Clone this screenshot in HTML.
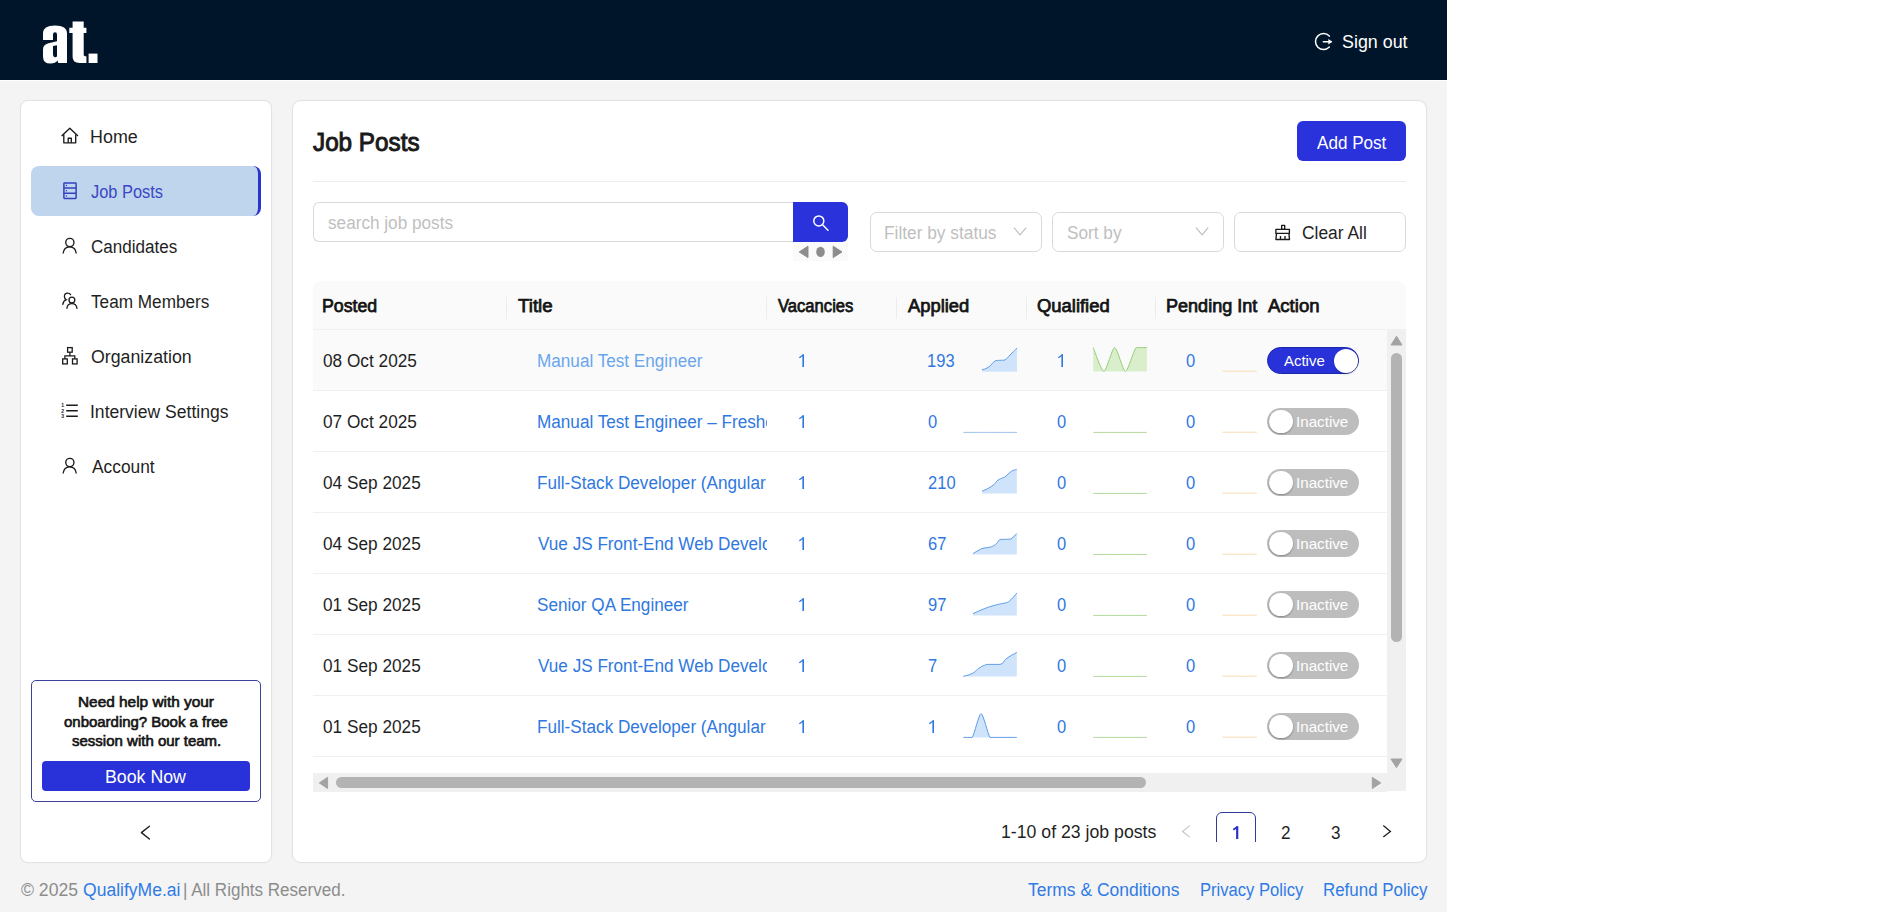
<!DOCTYPE html>
<html><head><meta charset="utf-8"><title>Job Posts</title>
<style>
html,body{margin:0;padding:0;background:#fff;width:1904px;height:916px;overflow:hidden;}
.b{position:absolute;}
.t{position:absolute;white-space:nowrap;font-family:"Liberation Sans", sans-serif;}
svg{overflow:visible;}
</style></head><body>
<div class="b" style="left:0px;top:0px;width:1447px;height:80px;background:#001529;"></div>
<div class="b" style="left:0px;top:80px;width:1447px;height:1px;background:#ffffff;"></div>
<div class="b" style="left:0px;top:81px;width:1447px;height:831px;background:#f4f4f4;"></div>
<svg class="b" style="left:30px;top:10px;" width="80" height="60" viewBox="30 10 80 60"><g fill="#fff" fill-rule="evenodd">
<path d="M43,40 V33.5 Q43,25.4 55,25.4 Q67,25.4 67,33.5 V63 H58.2 L57.6,60.6 Q55.6,63.6 50.5,63.6 Q43,63.6 43,56.5 V49.5 Q43,44.6 48.5,43.2 L57,41.3 V40 Z M53,40 V34.5 Q53,32.2 55,32.2 Q57,32.2 57,34.5 V40 Z M53,46 L57,45.2 V56.6 Q55.8,57.6 54.6,57.3 Q53,56.8 53,54.5 Z"/>
<path d="M72.6,21.5 H83.7 V27.7 H86.4 V32.9 H83.7 V54.8 Q83.7,56.2 85,56.2 H86.4 V63 H79.5 Q72.6,63 72.6,56.8 V32.9 H69.3 V27.7 H72.6 Z"/>
<rect x="88.6" y="53.6" width="8.9" height="9.4"/>
</g></svg>
<svg class="b" style="left:1310px;top:28px;" width="30" height="28" viewBox="1310 28 30 28"><g fill="none" stroke="#fff" stroke-width="1.5" stroke-linecap="round">
<path d="M1329.3,36.1 A8,8 0 1 0 1329.3,47.1"/>
<path d="M1323.3,41.7 H1331"/>
</g><path d="M1328.3,39 L1332.4,41.7 L1328.3,44.4 Z" fill="#fff"/></svg>
<div class="t" style="left:1341.93px;top:32.80px;font-size:18px;line-height:18px;color:#ffffff;transform:scaleX(0.9923);transform-origin:0 0;">Sign out</div>
<div class="b" style="left:20px;top:100px;width:252px;height:763px;background:#fff;border:1px solid #e3e3e3;border-radius:8px;box-sizing:border-box;box-shadow:0 0 1.5px rgba(0,0,0,0.05);"></div>
<div class="b" style="left:31px;top:166px;width:230px;height:50px;background:#bed5ed;border-radius:8px;border-right:3.5px solid #2834cc;box-sizing:border-box;"></div>
<svg class="b" style="left:56px;top:122px;" width="28" height="26" viewBox="56 122 28 26"><g fill="none" stroke="#1a1a1a" stroke-width="1.35" stroke-linejoin="round">
<path d="M61.6,136.1 L69.8,128.2 L78,136.1"/><path d="M63.8,134.4 V142.8 H75.7 V134.4"/><path d="M68.2,142.8 V138.2 H71.3 V142.8"/></g></svg>
<svg class="b" style="left:56px;top:177px;" width="28" height="27" viewBox="56 177 28 27"><g fill="none" stroke="#3440c0" stroke-width="1.5">
<rect x="63.9" y="183" width="12.2" height="15.4" rx="0.6"/><path d="M63.9,188 H76.1 M63.9,193.2 H76.1"/></g>
<g fill="#3440c0"><circle cx="66.4" cy="185.6" r="0.75"/><circle cx="66.4" cy="190.7" r="0.75"/><circle cx="66.4" cy="195.9" r="0.75"/></g></svg>
<svg class="b" style="left:56px;top:233px;" width="28" height="26" viewBox="56 233 28 26"><g fill="none" stroke="#1a1a1a" stroke-width="1.35">
<circle cx="69.85" cy="242.5" r="4.1"/>
<path d="M63.1,253.5 C63.6,249.3 66.3,246.9 69.7,246.9 C73.1,246.9 75.8,249.3 76.3,253.5"/></g></svg>
<svg class="b" style="left:56px;top:288px;" width="28" height="26" viewBox="56 288 28 26"><g fill="none" stroke="#1a1a1a" stroke-width="1.3" stroke-linecap="round">
<circle cx="71.9" cy="300.1" r="2.9"/>
<path d="M66.9,308.3 C67.2,305.5 69.3,303.7 71.9,303.7 C74.5,303.7 76.6,305.5 77,308.3"/>
<path d="M70.6,294.6 C70,293.7 68.9,293.1 67.6,293.1 C65.7,293.1 64.4,294.6 64.4,296.4 C64.4,297.9 65.2,299.1 66.3,299.7 C64.4,300.4 63.1,302.2 62.8,304.4"/></g></svg>
<svg class="b" style="left:56px;top:342px;" width="28" height="28" viewBox="56 342 28 28"><g fill="none" stroke="#1a1a1a" stroke-width="1.3">
<rect x="67.6" y="347.6" width="4.6" height="4.6"/><rect x="62.7" y="358.9" width="4.6" height="5"/><rect x="72.5" y="358.9" width="4.6" height="5"/>
<path d="M69.9,352.2 V355.8 M64.9,358.9 V355.8 H74.8 V358.9"/></g></svg>
<svg class="b" style="left:56px;top:396px;" width="28" height="28" viewBox="56 396 28 28"><g fill="none" stroke="#1a1a1a" stroke-width="1.5"><path d="M66.2,405.2 H77.8 M66.2,410.7 H77.8 M66.2,416.2 H77.8"/></g>
<g fill="#1a1a1a" font-family="Liberation Sans" font-size="5" font-weight="700"><text x="61.2" y="407.2">1</text><text x="61.2" y="412.7">2</text><text x="61.2" y="418.2">3</text></g></svg>
<svg class="b" style="left:56px;top:453px;" width="28" height="26" viewBox="56 453 28 26"><g fill="none" stroke="#1a1a1a" stroke-width="1.35">
<circle cx="69.85" cy="462.5" r="4.1"/>
<path d="M63.1,473.5 C63.6,469.3 66.3,466.9 69.7,466.9 C73.1,466.9 75.8,469.3 76.3,473.5"/></g></svg>
<div class="t" style="left:90.21px;top:128.00px;font-size:18px;line-height:18px;color:#1f1f1f;transform:scaleX(0.9945);transform-origin:0 0;">Home</div>
<div class="t" style="left:90.97px;top:182.80px;font-size:18px;line-height:18px;color:#3a46c4;transform:scaleX(0.9114);transform-origin:0 0;">Job Posts</div>
<div class="t" style="left:90.87px;top:237.60px;font-size:18px;line-height:18px;color:#1f1f1f;transform:scaleX(0.9473);transform-origin:0 0;">Candidates</div>
<div class="t" style="left:91.34px;top:292.60px;font-size:18px;line-height:18px;color:#1f1f1f;transform:scaleX(0.9545);transform-origin:0 0;">Team Members</div>
<div class="t" style="left:90.84px;top:347.60px;font-size:18px;line-height:18px;color:#1f1f1f;transform:scaleX(0.9860);transform-origin:0 0;">Organization</div>
<div class="t" style="left:90.12px;top:402.60px;font-size:18px;line-height:18px;color:#1f1f1f;transform:scaleX(0.9744);transform-origin:0 0;">Interview Settings</div>
<div class="t" style="left:91.70px;top:457.60px;font-size:18px;line-height:18px;color:#1f1f1f;transform:scaleX(0.9634);transform-origin:0 0;">Account</div>
<div class="b" style="left:31px;top:680px;width:230px;height:122px;border:1.3px solid #3c419c;border-radius:5px;box-sizing:border-box;background:#fff;"></div>
<div class="t" style="left:78.02px;top:694.10px;font-size:15px;line-height:15px;color:#141414;-webkit-text-stroke:0.65px #141414;transform:scaleX(1.0257);transform-origin:0 0;">Need help with your</div>
<div class="t" style="left:64.38px;top:713.90px;font-size:15px;line-height:15px;color:#141414;-webkit-text-stroke:0.65px #141414;transform:scaleX(0.9969);transform-origin:0 0;">onboarding? Book a free</div>
<div class="t" style="left:72.03px;top:733.40px;font-size:15px;line-height:15px;color:#141414;-webkit-text-stroke:0.65px #141414;">session with our team.</div>
<div class="b" style="left:42px;top:761px;width:208px;height:30px;background:#2832d8;border-radius:4px;"></div>
<div class="t" style="left:105.32px;top:767.80px;font-size:18px;line-height:18px;color:#fff;transform:scaleX(0.9863);transform-origin:0 0;">Book Now</div>
<svg class="b" style="left:132px;top:818px;" width="28" height="28" viewBox="132 818 28 28"><path d="M149.4,826.2 L141.4,832.6 L149.4,839" fill="none" stroke="#1f1f1f" stroke-width="1.4" stroke-linecap="round" stroke-linejoin="round"/></svg>
<div class="b" style="left:292px;top:100px;width:1135px;height:763px;background:#fff;border:1px solid #e3e3e3;border-radius:9px;box-sizing:border-box;box-shadow:0 0 1.5px rgba(0,0,0,0.05);"></div>
<div class="t" style="left:312.84px;top:130.20px;font-size:25px;line-height:25px;color:#1a1a1a;-webkit-text-stroke:0.95px #1a1a1a;transform:scaleX(0.9705);transform-origin:0 0;">Job Posts</div>
<div class="b" style="left:1297px;top:121px;width:109px;height:40px;background:#2932db;border-radius:6px;"></div>
<div class="t" style="left:1316.90px;top:133.90px;font-size:18px;line-height:18px;color:#fff;transform:scaleX(0.9496);transform-origin:0 0;">Add Post</div>
<div class="b" style="left:313px;top:181px;width:1093px;height:1px;background:#ececec;"></div>
<div class="b" style="left:313px;top:202px;width:481px;height:40px;border:1px solid #d9d9d9;border-right:none;border-radius:6px 0 0 6px;box-sizing:border-box;background:#fff;"></div>
<div class="t" style="left:328.02px;top:214.00px;font-size:18px;line-height:18px;color:#bfbfbf;transform:scaleX(0.9538);transform-origin:0 0;">search job posts</div>
<div class="b" style="left:793px;top:202px;width:55px;height:40px;background:#2932db;border-radius:0 6px 6px 0;"></div>
<svg class="b" style="left:805px;top:208px;" width="30" height="28" viewBox="805 208 30 28"><g fill="none" stroke="#fff" stroke-width="1.5" stroke-linecap="round"><circle cx="818.8" cy="220.9" r="5"/><path d="M822.6,224.8 L828,230.2"/></g></svg>
<div class="b" style="left:793px;top:242px;width:55px;height:19px;background:#fafafa;"></div>
<svg class="b" style="left:795px;top:244px;" width="52" height="16" viewBox="795 244 52 16"><g fill="#8c8c8c"><path d="M808,246.2 V257.6 L799.2,251.9 Z" stroke="#8c8c8c" stroke-width="1" stroke-linejoin="round"/><ellipse cx="820.5" cy="251.9" rx="4.3" ry="5.2"/><path d="M833.2,246.2 V257.6 L842,251.9 Z" stroke="#8c8c8c" stroke-width="1" stroke-linejoin="round"/></g></svg>
<div class="b" style="left:870px;top:212px;width:172px;height:40px;border:1px solid #d9d9d9;border-radius:7px;box-sizing:border-box;background:#fff;"></div>
<div class="t" style="left:884.06px;top:223.70px;font-size:18px;line-height:18px;color:#bfbfbf;transform:scaleX(0.9610);transform-origin:0 0;">Filter by status</div>
<svg class="b" style="left:1012.3px;top:224px;" width="16" height="14" viewBox="1012.3 224 16 14"><path d="M1014.3,227.6 L1020.4,234.9 L1026.5,227.6" fill="none" stroke="#bfbfbf" stroke-width="1.2"/></svg>
<div class="b" style="left:1052px;top:212px;width:172px;height:40px;border:1px solid #d9d9d9;border-radius:7px;box-sizing:border-box;background:#fff;"></div>
<div class="t" style="left:1066.66px;top:223.70px;font-size:18px;line-height:18px;color:#bfbfbf;transform:scaleX(0.9568);transform-origin:0 0;">Sort by</div>
<svg class="b" style="left:1194.3px;top:224px;" width="16" height="14" viewBox="1194.3 224 16 14"><path d="M1196.3,227.6 L1202.3999999999999,234.9 L1208.5,227.6" fill="none" stroke="#bfbfbf" stroke-width="1.2"/></svg>
<div class="b" style="left:1234px;top:212px;width:172px;height:40px;border:1px solid #d9d9d9;border-radius:7px;box-sizing:border-box;background:#fff;"></div>
<svg class="b" style="left:1272px;top:222px;" width="22" height="20" viewBox="1272 222 22 20"><g fill="none" stroke="#1a1a1a" stroke-width="1.35" stroke-linejoin="round">
<rect x="1281.7" y="225.3" width="3" height="4"/><rect x="1275.9" y="229.4" width="13.5" height="4"/>
<path d="M1276.5,233.4 L1275.9,239.5 H1289.5 L1288.9,233.4 M1280.5,236 V239.5 M1285,236 V239.5"/></g></svg>
<div class="t" style="left:1301.65px;top:223.70px;font-size:18px;line-height:18px;color:#1f1f1f;transform:scaleX(0.9665);transform-origin:0 0;">Clear All</div>
<div class="b" style="left:313px;top:281px;width:1093px;height:48px;background:#fafafa;border-radius:8px 8px 0 0;"></div>
<div class="b" style="left:313px;top:329px;width:1093px;height:1px;background:#f0f0f0;"></div>
<div class="b" style="left:506px;top:297px;width:1px;height:22px;background:#ececec;"></div>
<div class="b" style="left:766px;top:297px;width:1px;height:22px;background:#ececec;"></div>
<div class="b" style="left:896px;top:297px;width:1px;height:22px;background:#ececec;"></div>
<div class="b" style="left:1026px;top:297px;width:1px;height:22px;background:#ececec;"></div>
<div class="b" style="left:1155px;top:297px;width:1px;height:22px;background:#ececec;"></div>
<div class="t" style="left:322.37px;top:297.00px;font-size:18px;line-height:18px;color:#141414;-webkit-text-stroke:0.75px #141414;transform:scaleX(0.9855);transform-origin:0 0;">Posted</div>
<div class="t" style="left:517.86px;top:297.00px;font-size:18px;line-height:18px;color:#141414;-webkit-text-stroke:0.75px #141414;transform:scaleX(1.0388);transform-origin:0 0;">Title</div>
<div class="t" style="left:778.13px;top:297.00px;font-size:18px;line-height:18px;color:#141414;-webkit-text-stroke:0.75px #141414;transform:scaleX(0.9222);transform-origin:0 0;">Vacancies</div>
<div class="t" style="left:907.85px;top:297.00px;font-size:18px;line-height:18px;color:#141414;-webkit-text-stroke:0.75px #141414;transform:scaleX(1.0208);transform-origin:0 0;">Applied</div>
<div class="t" style="left:1036.75px;top:297.00px;font-size:18px;line-height:18px;color:#141414;-webkit-text-stroke:0.75px #141414;transform:scaleX(1.0232);transform-origin:0 0;">Qualified</div>
<div class="t" style="left:1165.75px;top:297.00px;font-size:18px;line-height:18px;color:#141414;-webkit-text-stroke:0.75px #141414;transform:scaleX(1.0022);transform-origin:0 0;">Pending Int</div>
<div class="t" style="left:1268.05px;top:297.00px;font-size:18px;line-height:18px;color:#141414;-webkit-text-stroke:0.75px #141414;transform:scaleX(1.0292);transform-origin:0 0;">Action</div>
<div class="b" style="left:313px;top:330px;width:1074px;height:443px;overflow:hidden;">
<div class="b" style="left:-313px;top:-330px;width:1904px;height:916px;">
<div class="b" style="left:313px;top:330px;width:1074px;height:60px;background:#fafafa;"></div>
<div class="b" style="left:313px;top:390px;width:1074px;height:1px;background:#f0f0f0;"></div>
<div class="t" style="left:322.88px;top:351.50px;font-size:18px;line-height:18px;color:#1f1f1f;transform:scaleX(0.9573);transform-origin:0 0;">08 Oct 2025</div>
<div class="b" style="left:507px;top:330px;width:260px;height:60px;overflow:hidden;">
<div class="b" style="left:-507px;top:-330px;width:1904px;height:916px;">
<div class="t" style="left:536.77px;top:351.50px;font-size:18px;line-height:18px;color:#6aa6ee;transform:scaleX(0.9523);transform-origin:0 0;">Manual Test Engineer</div>
</div></div>
<svg class="b" style="left:796.7px;top:351.5px;" width="10" height="17" viewBox="796.7 351.5 10 17"><path d="M802.90,366.50 V353.80" stroke="#2f78e0" stroke-width="1.65" fill="none"/><path d="M803.30,354.20 L799.00,357.20" stroke="#2f78e0" stroke-width="1.40" fill="none"/></svg>
<div class="t" style="left:927.44px;top:351.50px;font-size:18px;line-height:18px;color:#2f78e0;transform:scaleX(0.9184);transform-origin:0 0;">193</div>
<svg class="b" style="left:1056.1px;top:351.5px;" width="10" height="17" viewBox="1056.1 351.5 10 17"><path d="M1062.30,366.50 V353.80" stroke="#2f78e0" stroke-width="1.65" fill="none"/><path d="M1062.70,354.20 L1058.40,357.20" stroke="#2f78e0" stroke-width="1.40" fill="none"/></svg>
<div class="t" style="left:1186.41px;top:351.50px;font-size:18px;line-height:18px;color:#2f78e0;transform:scaleX(0.9184);transform-origin:0 0;">0</div>
<div class="b" style="left:313px;top:451px;width:1074px;height:1px;background:#f0f0f0;"></div>
<div class="t" style="left:322.88px;top:412.50px;font-size:18px;line-height:18px;color:#1f1f1f;transform:scaleX(0.9573);transform-origin:0 0;">07 Oct 2025</div>
<div class="b" style="left:507px;top:391px;width:260px;height:60px;overflow:hidden;">
<div class="b" style="left:-507px;top:-391px;width:1904px;height:916px;">
<div class="t" style="left:536.77px;top:412.50px;font-size:18px;line-height:18px;color:#2f78e0;transform:scaleX(0.9523);transform-origin:0 0;">Manual Test Engineer – Freshers</div>
</div></div>
<svg class="b" style="left:796.7px;top:412.5px;" width="10" height="17" viewBox="796.7 412.5 10 17"><path d="M802.90,427.50 V414.80" stroke="#2f78e0" stroke-width="1.65" fill="none"/><path d="M803.30,415.20 L799.00,418.20" stroke="#2f78e0" stroke-width="1.40" fill="none"/></svg>
<div class="t" style="left:927.61px;top:412.50px;font-size:18px;line-height:18px;color:#2f78e0;transform:scaleX(0.9184);transform-origin:0 0;">0</div>
<div class="t" style="left:1056.81px;top:412.50px;font-size:18px;line-height:18px;color:#2f78e0;transform:scaleX(0.9184);transform-origin:0 0;">0</div>
<div class="t" style="left:1186.41px;top:412.50px;font-size:18px;line-height:18px;color:#2f78e0;transform:scaleX(0.9184);transform-origin:0 0;">0</div>
<div class="b" style="left:313px;top:512px;width:1074px;height:1px;background:#f0f0f0;"></div>
<div class="t" style="left:322.88px;top:473.50px;font-size:18px;line-height:18px;color:#1f1f1f;transform:scaleX(0.9573);transform-origin:0 0;">04 Sep 2025</div>
<div class="b" style="left:507px;top:452px;width:260px;height:60px;overflow:hidden;">
<div class="b" style="left:-507px;top:-452px;width:1904px;height:916px;">
<div class="t" style="left:536.77px;top:473.50px;font-size:18px;line-height:18px;color:#2f78e0;transform:scaleX(0.9523);transform-origin:0 0;">Full-Stack Developer (Angular + Node)</div>
</div></div>
<svg class="b" style="left:796.7px;top:473.5px;" width="10" height="17" viewBox="796.7 473.5 10 17"><path d="M802.90,488.50 V475.80" stroke="#2f78e0" stroke-width="1.65" fill="none"/><path d="M803.30,476.20 L799.00,479.20" stroke="#2f78e0" stroke-width="1.40" fill="none"/></svg>
<div class="t" style="left:927.90px;top:473.50px;font-size:18px;line-height:18px;color:#2f78e0;transform:scaleX(0.9184);transform-origin:0 0;">210</div>
<div class="t" style="left:1056.81px;top:473.50px;font-size:18px;line-height:18px;color:#2f78e0;transform:scaleX(0.9184);transform-origin:0 0;">0</div>
<div class="t" style="left:1186.41px;top:473.50px;font-size:18px;line-height:18px;color:#2f78e0;transform:scaleX(0.9184);transform-origin:0 0;">0</div>
<div class="b" style="left:313px;top:573px;width:1074px;height:1px;background:#f0f0f0;"></div>
<div class="t" style="left:322.88px;top:534.50px;font-size:18px;line-height:18px;color:#1f1f1f;transform:scaleX(0.9573);transform-origin:0 0;">04 Sep 2025</div>
<div class="b" style="left:507px;top:513px;width:260px;height:60px;overflow:hidden;">
<div class="b" style="left:-507px;top:-513px;width:1904px;height:916px;">
<div class="t" style="left:538.08px;top:534.50px;font-size:18px;line-height:18px;color:#2f78e0;transform:scaleX(0.9523);transform-origin:0 0;">Vue JS Front-End Web Developer</div>
</div></div>
<svg class="b" style="left:796.7px;top:534.5px;" width="10" height="17" viewBox="796.7 534.5 10 17"><path d="M802.90,549.50 V536.80" stroke="#2f78e0" stroke-width="1.65" fill="none"/><path d="M803.30,537.20 L799.00,540.20" stroke="#2f78e0" stroke-width="1.40" fill="none"/></svg>
<div class="t" style="left:927.50px;top:534.50px;font-size:18px;line-height:18px;color:#2f78e0;transform:scaleX(0.9184);transform-origin:0 0;">67</div>
<div class="t" style="left:1056.81px;top:534.50px;font-size:18px;line-height:18px;color:#2f78e0;transform:scaleX(0.9184);transform-origin:0 0;">0</div>
<div class="t" style="left:1186.41px;top:534.50px;font-size:18px;line-height:18px;color:#2f78e0;transform:scaleX(0.9184);transform-origin:0 0;">0</div>
<div class="b" style="left:313px;top:634px;width:1074px;height:1px;background:#f0f0f0;"></div>
<div class="t" style="left:322.88px;top:595.50px;font-size:18px;line-height:18px;color:#1f1f1f;transform:scaleX(0.9573);transform-origin:0 0;">01 Sep 2025</div>
<div class="b" style="left:507px;top:574px;width:260px;height:60px;overflow:hidden;">
<div class="b" style="left:-507px;top:-574px;width:1904px;height:916px;">
<div class="t" style="left:537.37px;top:595.50px;font-size:18px;line-height:18px;color:#2f78e0;transform:scaleX(0.9523);transform-origin:0 0;">Senior QA Engineer</div>
</div></div>
<svg class="b" style="left:796.7px;top:595.5px;" width="10" height="17" viewBox="796.7 595.5 10 17"><path d="M802.90,610.50 V597.80" stroke="#2f78e0" stroke-width="1.65" fill="none"/><path d="M803.30,598.20 L799.00,601.20" stroke="#2f78e0" stroke-width="1.40" fill="none"/></svg>
<div class="t" style="left:927.50px;top:595.50px;font-size:18px;line-height:18px;color:#2f78e0;transform:scaleX(0.9184);transform-origin:0 0;">97</div>
<div class="t" style="left:1056.81px;top:595.50px;font-size:18px;line-height:18px;color:#2f78e0;transform:scaleX(0.9184);transform-origin:0 0;">0</div>
<div class="t" style="left:1186.41px;top:595.50px;font-size:18px;line-height:18px;color:#2f78e0;transform:scaleX(0.9184);transform-origin:0 0;">0</div>
<div class="b" style="left:313px;top:695px;width:1074px;height:1px;background:#f0f0f0;"></div>
<div class="t" style="left:322.88px;top:656.50px;font-size:18px;line-height:18px;color:#1f1f1f;transform:scaleX(0.9573);transform-origin:0 0;">01 Sep 2025</div>
<div class="b" style="left:507px;top:635px;width:260px;height:60px;overflow:hidden;">
<div class="b" style="left:-507px;top:-635px;width:1904px;height:916px;">
<div class="t" style="left:538.08px;top:656.50px;font-size:18px;line-height:18px;color:#2f78e0;transform:scaleX(0.9523);transform-origin:0 0;">Vue JS Front-End Web Developer</div>
</div></div>
<svg class="b" style="left:796.7px;top:656.5px;" width="10" height="17" viewBox="796.7 656.5 10 17"><path d="M802.90,671.50 V658.80" stroke="#2f78e0" stroke-width="1.65" fill="none"/><path d="M803.30,659.20 L799.00,662.20" stroke="#2f78e0" stroke-width="1.40" fill="none"/></svg>
<div class="t" style="left:927.50px;top:656.50px;font-size:18px;line-height:18px;color:#2f78e0;transform:scaleX(0.9184);transform-origin:0 0;">7</div>
<div class="t" style="left:1056.81px;top:656.50px;font-size:18px;line-height:18px;color:#2f78e0;transform:scaleX(0.9184);transform-origin:0 0;">0</div>
<div class="t" style="left:1186.41px;top:656.50px;font-size:18px;line-height:18px;color:#2f78e0;transform:scaleX(0.9184);transform-origin:0 0;">0</div>
<div class="b" style="left:313px;top:756px;width:1074px;height:1px;background:#f0f0f0;"></div>
<div class="t" style="left:322.88px;top:717.50px;font-size:18px;line-height:18px;color:#1f1f1f;transform:scaleX(0.9573);transform-origin:0 0;">01 Sep 2025</div>
<div class="b" style="left:507px;top:696px;width:260px;height:60px;overflow:hidden;">
<div class="b" style="left:-507px;top:-696px;width:1904px;height:916px;">
<div class="t" style="left:536.77px;top:717.50px;font-size:18px;line-height:18px;color:#2f78e0;transform:scaleX(0.9523);transform-origin:0 0;">Full-Stack Developer (Angular + Node)</div>
</div></div>
<svg class="b" style="left:796.7px;top:717.5px;" width="10" height="17" viewBox="796.7 717.5 10 17"><path d="M802.90,732.50 V719.80" stroke="#2f78e0" stroke-width="1.65" fill="none"/><path d="M803.30,720.20 L799.00,723.20" stroke="#2f78e0" stroke-width="1.40" fill="none"/></svg>
<svg class="b" style="left:926.7px;top:717.5px;" width="10" height="17" viewBox="926.7 717.5 10 17"><path d="M932.90,732.50 V719.80" stroke="#2f78e0" stroke-width="1.65" fill="none"/><path d="M933.30,720.20 L929.00,723.20" stroke="#2f78e0" stroke-width="1.40" fill="none"/></svg>
<div class="t" style="left:1056.81px;top:717.50px;font-size:18px;line-height:18px;color:#2f78e0;transform:scaleX(0.9184);transform-origin:0 0;">0</div>
<div class="t" style="left:1186.41px;top:717.50px;font-size:18px;line-height:18px;color:#2f78e0;transform:scaleX(0.9184);transform-origin:0 0;">0</div>
</div></div>
<svg class="b" style="left:980px;top:346px;" width="41" height="29" viewBox="980 346 41 29"><path d="M982.00,369.80 C983.92,369.02 984.41,369.80 988.40,367.20 C992.39,364.50 991.97,362.87 995.30,360.80 C998.63,360.30 996.80,360.48 999.50,360.30 C1002.20,360.20 1000.85,360.30 1004.30,360.20 C1007.75,358.31 1007.19,357.63 1011.00,354.00 C1014.81,350.37 1015.20,349.87 1017.00,348.10 L1017.00,371.80 L982.00,371.80 Z" fill="#cfe3fb" stroke="none"/><path d="M982.00,369.80 C983.92,369.02 984.41,369.80 988.40,367.20 C992.39,364.50 991.97,362.87 995.30,360.80 C998.63,360.30 996.80,360.48 999.50,360.30 C1002.20,360.20 1000.85,360.30 1004.30,360.20 C1007.75,358.31 1007.19,357.63 1011.00,354.00 C1014.81,350.37 1015.20,349.87 1017.00,348.10" fill="none" stroke="#5b9be6" stroke-width="1" stroke-linejoin="round"/></svg>
<svg class="b" style="left:961px;top:430px;" width="60" height="6" viewBox="961 430 60 6"><path d="M963.30,432.40 C979.41,432.40 1000.89,432.40 1017.00,432.40 L1017.00,432.40 L963.30,432.40 Z" fill="#cfe3fb" stroke="none"/><path d="M963.30,432.40 C979.41,432.40 1000.89,432.40 1017.00,432.40" fill="none" stroke="#9fc3ef" stroke-width="1" stroke-linejoin="round"/></svg>
<svg class="b" style="left:980px;top:467px;" width="40" height="30" viewBox="980 467 40 30"><path d="M982.10,491.20 C984.98,489.70 986.93,489.53 991.70,486.20 C996.47,482.87 995.06,482.47 998.00,480.10 C1000.94,478.30 999.46,479.23 1001.50,478.30 C1003.54,477.37 1002.37,478.30 1004.80,477.00 C1007.23,475.32 1006.99,474.71 1009.60,472.70 C1012.21,470.69 1011.34,471.23 1013.50,470.30 C1015.66,469.60 1015.81,469.81 1016.80,469.60 L1016.80,493.60 L982.10,493.60 Z" fill="#cfe3fb" stroke="none"/><path d="M982.10,491.20 C984.98,489.70 986.93,489.53 991.70,486.20 C996.47,482.87 995.06,482.47 998.00,480.10 C1000.94,478.30 999.46,479.23 1001.50,478.30 C1003.54,477.37 1002.37,478.30 1004.80,477.00 C1007.23,475.32 1006.99,474.71 1009.60,472.70 C1012.21,470.69 1011.34,471.23 1013.50,470.30 C1015.66,469.60 1015.81,469.81 1016.80,469.60" fill="none" stroke="#5b9be6" stroke-width="1" stroke-linejoin="round"/></svg>
<svg class="b" style="left:971px;top:531px;" width="49" height="27" viewBox="971 531 49 27"><path d="M973.10,553.60 C974.60,552.70 975.16,552.16 978.10,550.60 C981.04,549.04 979.63,549.39 982.90,548.40 C986.17,547.41 985.85,548.08 989.00,547.30 C992.15,546.52 991.03,547.06 993.40,545.80 C995.77,544.54 994.65,545.02 996.90,543.10 C999.15,541.18 997.09,540.57 1000.90,539.40 C1004.71,539.20 1006.33,539.40 1009.60,539.20 C1012.87,538.87 1009.64,539.20 1011.80,538.30 C1013.96,536.59 1015.30,534.94 1016.80,533.50 L1016.80,554.50 L973.10,554.50 Z" fill="#cfe3fb" stroke="none"/><path d="M973.10,553.60 C974.60,552.70 975.16,552.16 978.10,550.60 C981.04,549.04 979.63,549.39 982.90,548.40 C986.17,547.41 985.85,548.08 989.00,547.30 C992.15,546.52 991.03,547.06 993.40,545.80 C995.77,544.54 994.65,545.02 996.90,543.10 C999.15,541.18 997.09,540.57 1000.90,539.40 C1004.71,539.20 1006.33,539.40 1009.60,539.20 C1012.87,538.87 1009.64,539.20 1011.80,538.30 C1013.96,536.59 1015.30,534.94 1016.80,533.50" fill="none" stroke="#5b9be6" stroke-width="1" stroke-linejoin="round"/></svg>
<svg class="b" style="left:971px;top:591px;" width="49" height="28" viewBox="971 591 49 28"><path d="M973.00,613.60 C975.97,612.31 976.90,611.64 982.90,609.30 C988.90,606.96 986.58,607.66 993.00,605.80 C999.42,603.94 999.98,604.15 1004.30,603.10 C1008.62,602.30 1005.42,603.10 1007.40,602.30 C1009.38,601.28 1008.08,602.30 1010.90,599.70 C1013.72,596.94 1015.03,595.08 1016.80,593.10 L1016.80,615.60 L973.00,615.60 Z" fill="#cfe3fb" stroke="none"/><path d="M973.00,613.60 C975.97,612.31 976.90,611.64 982.90,609.30 C988.90,606.96 986.58,607.66 993.00,605.80 C999.42,603.94 999.98,604.15 1004.30,603.10 C1008.62,602.30 1005.42,603.10 1007.40,602.30 C1009.38,601.28 1008.08,602.30 1010.90,599.70 C1013.72,596.94 1015.03,595.08 1016.80,593.10" fill="none" stroke="#5b9be6" stroke-width="1" stroke-linejoin="round"/></svg>
<svg class="b" style="left:961px;top:650px;" width="59" height="30" viewBox="961 650 59 30"><path d="M963.30,676.40 C966.06,675.47 967.91,675.67 972.50,673.30 C977.09,670.93 974.94,670.93 978.60,668.50 C982.26,666.07 981.82,666.43 984.70,665.20 C987.58,664.40 983.61,664.64 988.20,664.40 C992.79,664.40 994.36,664.40 1000.00,664.40 C1005.64,662.54 1001.96,661.80 1007.00,658.20 C1012.04,654.60 1013.86,654.14 1016.80,652.40 L1016.80,676.60 L963.30,676.60 Z" fill="#cfe3fb" stroke="none"/><path d="M963.30,676.40 C966.06,675.47 967.91,675.67 972.50,673.30 C977.09,670.93 974.94,670.93 978.60,668.50 C982.26,666.07 981.82,666.43 984.70,665.20 C987.58,664.40 983.61,664.64 988.20,664.40 C992.79,664.40 994.36,664.40 1000.00,664.40 C1005.64,662.54 1001.96,661.80 1007.00,658.20 C1012.04,654.60 1013.86,654.14 1016.80,652.40" fill="none" stroke="#5b9be6" stroke-width="1" stroke-linejoin="round"/></svg>
<svg class="b" style="left:961px;top:711px;" width="59" height="30" viewBox="961 711 59 30"><path d="M963.30,737.40 C964.34,737.40 970.12,737.40 972.20,737.40 C974.28,734.62 979.02,713.60 981.10,713.60 C983.18,713.60 987.92,734.62 990.00,737.40 C992.08,737.40 996.82,737.40 998.90,737.40 C1000.98,737.40 1005.71,737.40 1007.80,737.40 C1009.89,737.40 1015.75,737.40 1016.80,737.40 L1016.80,737.40 L963.30,737.40 Z" fill="#cfe3fb" stroke="none"/><path d="M963.30,737.40 C964.34,737.40 970.12,737.40 972.20,737.40 C974.28,734.62 979.02,713.60 981.10,713.60 C983.18,713.60 987.92,734.62 990.00,737.40 C992.08,737.40 996.82,737.40 998.90,737.40 C1000.98,737.40 1005.71,737.40 1007.80,737.40 C1009.89,737.40 1015.75,737.40 1016.80,737.40" fill="none" stroke="#5b9be6" stroke-width="1" stroke-linejoin="round"/></svg>
<svg class="b" style="left:1091px;top:345px;" width="59" height="30" viewBox="1091 345 59 30"><path d="M1093.20,347.60 C1094.45,350.38 1101.39,371.40 1103.90,371.40 C1106.41,371.40 1112.19,347.60 1114.70,347.60 C1117.21,347.60 1122.90,371.40 1125.40,371.40 C1127.90,371.40 1133.59,350.38 1136.10,347.60 C1138.61,347.60 1145.64,347.60 1146.90,347.60 L1146.90,371.60 L1093.20,371.60 Z" fill="#d9efcb" stroke="none"/><path d="M1093.20,347.60 C1094.45,350.38 1101.39,371.40 1103.90,371.40 C1106.41,371.40 1112.19,347.60 1114.70,347.60 C1117.21,347.60 1122.90,371.40 1125.40,371.40 C1127.90,371.40 1133.59,350.38 1136.10,347.60 C1138.61,347.60 1145.64,347.60 1146.90,347.60" fill="none" stroke="#97cf78" stroke-width="1" stroke-linejoin="round"/></svg>
<svg class="b" style="left:1091px;top:430px;" width="59" height="6" viewBox="1091 430 59 6"><path d="M1093.20,432.40 C1109.31,432.40 1130.79,432.40 1146.90,432.40 L1146.90,432.40 L1093.20,432.40 Z" fill="#d9efcb" stroke="none"/><path d="M1093.20,432.40 C1109.31,432.40 1130.79,432.40 1146.90,432.40" fill="none" stroke="#b5d99c" stroke-width="1" stroke-linejoin="round"/></svg>
<svg class="b" style="left:1091px;top:491px;" width="59" height="6" viewBox="1091 491 59 6"><path d="M1093.20,493.40 C1109.31,493.40 1130.79,493.40 1146.90,493.40 L1146.90,493.40 L1093.20,493.40 Z" fill="#d9efcb" stroke="none"/><path d="M1093.20,493.40 C1109.31,493.40 1130.79,493.40 1146.90,493.40" fill="none" stroke="#b5d99c" stroke-width="1" stroke-linejoin="round"/></svg>
<svg class="b" style="left:1091px;top:552px;" width="59" height="6" viewBox="1091 552 59 6"><path d="M1093.20,554.40 C1109.31,554.40 1130.79,554.40 1146.90,554.40 L1146.90,554.40 L1093.20,554.40 Z" fill="#d9efcb" stroke="none"/><path d="M1093.20,554.40 C1109.31,554.40 1130.79,554.40 1146.90,554.40" fill="none" stroke="#b5d99c" stroke-width="1" stroke-linejoin="round"/></svg>
<svg class="b" style="left:1091px;top:613px;" width="59" height="6" viewBox="1091 613 59 6"><path d="M1093.20,615.40 C1109.31,615.40 1130.79,615.40 1146.90,615.40 L1146.90,615.40 L1093.20,615.40 Z" fill="#d9efcb" stroke="none"/><path d="M1093.20,615.40 C1109.31,615.40 1130.79,615.40 1146.90,615.40" fill="none" stroke="#b5d99c" stroke-width="1" stroke-linejoin="round"/></svg>
<svg class="b" style="left:1091px;top:674px;" width="59" height="6" viewBox="1091 674 59 6"><path d="M1093.20,676.40 C1109.31,676.40 1130.79,676.40 1146.90,676.40 L1146.90,676.40 L1093.20,676.40 Z" fill="#d9efcb" stroke="none"/><path d="M1093.20,676.40 C1109.31,676.40 1130.79,676.40 1146.90,676.40" fill="none" stroke="#b5d99c" stroke-width="1" stroke-linejoin="round"/></svg>
<svg class="b" style="left:1091px;top:735px;" width="59" height="6" viewBox="1091 735 59 6"><path d="M1093.20,737.40 C1109.31,737.40 1130.79,737.40 1146.90,737.40 L1146.90,737.40 L1093.20,737.40 Z" fill="#d9efcb" stroke="none"/><path d="M1093.20,737.40 C1109.31,737.40 1130.79,737.40 1146.90,737.40" fill="none" stroke="#b5d99c" stroke-width="1" stroke-linejoin="round"/></svg>
<svg class="b" style="left:1220px;top:369px;" width="40" height="6" viewBox="1220 369 40 6"><path d="M1222.40,371.20 C1232.72,371.20 1246.48,371.20 1256.80,371.20 L1256.80,371.20 L1222.40,371.20 Z" fill="#d9efcb" stroke="none"/><path d="M1222.40,371.20 C1232.72,371.20 1246.48,371.20 1256.80,371.20" fill="none" stroke="#f6dcaf" stroke-width="1" stroke-linejoin="round"/></svg>
<svg class="b" style="left:1220px;top:430px;" width="40" height="6" viewBox="1220 430 40 6"><path d="M1222.40,432.20 C1232.72,432.20 1246.48,432.20 1256.80,432.20 L1256.80,432.20 L1222.40,432.20 Z" fill="#d9efcb" stroke="none"/><path d="M1222.40,432.20 C1232.72,432.20 1246.48,432.20 1256.80,432.20" fill="none" stroke="#f6dcaf" stroke-width="1" stroke-linejoin="round"/></svg>
<svg class="b" style="left:1220px;top:491px;" width="40" height="6" viewBox="1220 491 40 6"><path d="M1222.40,493.20 C1232.72,493.20 1246.48,493.20 1256.80,493.20 L1256.80,493.20 L1222.40,493.20 Z" fill="#d9efcb" stroke="none"/><path d="M1222.40,493.20 C1232.72,493.20 1246.48,493.20 1256.80,493.20" fill="none" stroke="#f6dcaf" stroke-width="1" stroke-linejoin="round"/></svg>
<svg class="b" style="left:1220px;top:552px;" width="40" height="6" viewBox="1220 552 40 6"><path d="M1222.40,554.20 C1232.72,554.20 1246.48,554.20 1256.80,554.20 L1256.80,554.20 L1222.40,554.20 Z" fill="#d9efcb" stroke="none"/><path d="M1222.40,554.20 C1232.72,554.20 1246.48,554.20 1256.80,554.20" fill="none" stroke="#f6dcaf" stroke-width="1" stroke-linejoin="round"/></svg>
<svg class="b" style="left:1220px;top:613px;" width="40" height="6" viewBox="1220 613 40 6"><path d="M1222.40,615.20 C1232.72,615.20 1246.48,615.20 1256.80,615.20 L1256.80,615.20 L1222.40,615.20 Z" fill="#d9efcb" stroke="none"/><path d="M1222.40,615.20 C1232.72,615.20 1246.48,615.20 1256.80,615.20" fill="none" stroke="#f6dcaf" stroke-width="1" stroke-linejoin="round"/></svg>
<svg class="b" style="left:1220px;top:674px;" width="40" height="6" viewBox="1220 674 40 6"><path d="M1222.40,676.20 C1232.72,676.20 1246.48,676.20 1256.80,676.20 L1256.80,676.20 L1222.40,676.20 Z" fill="#d9efcb" stroke="none"/><path d="M1222.40,676.20 C1232.72,676.20 1246.48,676.20 1256.80,676.20" fill="none" stroke="#f6dcaf" stroke-width="1" stroke-linejoin="round"/></svg>
<svg class="b" style="left:1220px;top:735px;" width="40" height="6" viewBox="1220 735 40 6"><path d="M1222.40,737.20 C1232.72,737.20 1246.48,737.20 1256.80,737.20 L1256.80,737.20 L1222.40,737.20 Z" fill="#d9efcb" stroke="none"/><path d="M1222.40,737.20 C1232.72,737.20 1246.48,737.20 1256.80,737.20" fill="none" stroke="#f6dcaf" stroke-width="1" stroke-linejoin="round"/></svg>
<div class="b" style="left:1267px;top:347px;width:92px;height:27px;background:#2832d8;border-radius:14px;border:1.5px solid #1c26a8;box-sizing:border-box;"></div>
<div class="b" style="left:1333.7px;top:348.8px;width:24px;height:24px;background:#fff;border-radius:50%;box-shadow:0 1px 2px rgba(0,0,0,.25);"></div>
<div class="t" style="left:1284.20px;top:353.00px;font-size:15px;line-height:15px;color:#fff;transform:scaleX(0.9969);transform-origin:0 0;">Active</div>
<div class="b" style="left:1267px;top:408px;width:92px;height:27px;background:#bdbdbd;border-radius:14px;"></div>
<div class="b" style="left:1269.3px;top:409.8px;width:23.5px;height:23.5px;background:#fff;border-radius:50%;box-shadow:0 1px 2px rgba(0,0,0,.3);"></div>
<div class="t" style="left:1296.21px;top:414.00px;font-size:15px;line-height:15px;color:#fff;transform:scaleX(1.0116);transform-origin:0 0;">Inactive</div>
<div class="b" style="left:1267px;top:469px;width:92px;height:27px;background:#bdbdbd;border-radius:14px;"></div>
<div class="b" style="left:1269.3px;top:470.8px;width:23.5px;height:23.5px;background:#fff;border-radius:50%;box-shadow:0 1px 2px rgba(0,0,0,.3);"></div>
<div class="t" style="left:1296.21px;top:475.00px;font-size:15px;line-height:15px;color:#fff;transform:scaleX(1.0116);transform-origin:0 0;">Inactive</div>
<div class="b" style="left:1267px;top:530px;width:92px;height:27px;background:#bdbdbd;border-radius:14px;"></div>
<div class="b" style="left:1269.3px;top:531.8px;width:23.5px;height:23.5px;background:#fff;border-radius:50%;box-shadow:0 1px 2px rgba(0,0,0,.3);"></div>
<div class="t" style="left:1296.21px;top:536.00px;font-size:15px;line-height:15px;color:#fff;transform:scaleX(1.0116);transform-origin:0 0;">Inactive</div>
<div class="b" style="left:1267px;top:591px;width:92px;height:27px;background:#bdbdbd;border-radius:14px;"></div>
<div class="b" style="left:1269.3px;top:592.8px;width:23.5px;height:23.5px;background:#fff;border-radius:50%;box-shadow:0 1px 2px rgba(0,0,0,.3);"></div>
<div class="t" style="left:1296.21px;top:597.00px;font-size:15px;line-height:15px;color:#fff;transform:scaleX(1.0116);transform-origin:0 0;">Inactive</div>
<div class="b" style="left:1267px;top:652px;width:92px;height:27px;background:#bdbdbd;border-radius:14px;"></div>
<div class="b" style="left:1269.3px;top:653.8px;width:23.5px;height:23.5px;background:#fff;border-radius:50%;box-shadow:0 1px 2px rgba(0,0,0,.3);"></div>
<div class="t" style="left:1296.21px;top:658.00px;font-size:15px;line-height:15px;color:#fff;transform:scaleX(1.0116);transform-origin:0 0;">Inactive</div>
<div class="b" style="left:1267px;top:713px;width:92px;height:27px;background:#bdbdbd;border-radius:14px;"></div>
<div class="b" style="left:1269.3px;top:714.8px;width:23.5px;height:23.5px;background:#fff;border-radius:50%;box-shadow:0 1px 2px rgba(0,0,0,.3);"></div>
<div class="t" style="left:1296.21px;top:719.00px;font-size:15px;line-height:15px;color:#fff;transform:scaleX(1.0116);transform-origin:0 0;">Inactive</div>
<div class="b" style="left:1387px;top:329px;width:19px;height:462px;background:#f0f0f0;"></div>
<svg class="b" style="left:1387px;top:330px;" width="19" height="20" viewBox="1387 330 19 20"><path d="M1391,345 L1396.5,336.3 L1402,345 Z" fill="#a3a3a3" stroke="#a3a3a3" stroke-linejoin="round" stroke-width="1"/></svg>
<div class="b" style="left:1391px;top:353px;width:11px;height:289px;background:#b3b3b3;border-radius:6px;"></div>
<svg class="b" style="left:1387px;top:755px;" width="19" height="16" viewBox="1387 755 19 16"><path d="M1391,759 L1396.5,767.6 L1402,759 Z" fill="#a3a3a3" stroke="#a3a3a3" stroke-linejoin="round" stroke-width="1"/></svg>
<div class="b" style="left:313px;top:773px;width:1074px;height:19px;background:#f0f0f0;"></div>
<svg class="b" style="left:313px;top:773px;" width="20" height="19" viewBox="313 773 20 19"><path d="M327.6,777.3 V788.5 L319.3,782.9 Z" fill="#a3a3a3" stroke="#a3a3a3" stroke-linejoin="round" stroke-width="1"/></svg>
<div class="b" style="left:336px;top:777px;width:810px;height:11px;background:#b3b3b3;border-radius:6px;"></div>
<svg class="b" style="left:1365px;top:773px;" width="22" height="19" viewBox="1365 773 22 19"><path d="M1372.3,777.3 V788.5 L1380.8,782.9 Z" fill="#a3a3a3" stroke="#a3a3a3" stroke-linejoin="round" stroke-width="1"/></svg>
<div class="t" style="left:1000.75px;top:822.60px;font-size:18px;line-height:18px;color:#1f1f1f;transform:scaleX(0.9825);transform-origin:0 0;">1-10 of 23 job posts</div>
<svg class="b" style="left:1178px;top:822px;" width="16" height="18" viewBox="1178 822 16 18"><path d="M1189.7,825.6 L1182.6,831.4 L1189.7,837.1" fill="none" stroke="#c4c4c4" stroke-width="1.2"/></svg>
<div class="b" style="left:1216px;top:812px;width:40px;height:30px;overflow:hidden;"><div class="b" style="left:0;top:0;width:40px;height:40px;border:1.2px solid #2f3a9c;border-radius:6px;box-sizing:border-box;"></div></div>
<svg class="b" style="left:1231.2px;top:824px;" width="10" height="17" viewBox="1231.2 824 10 17"><path d="M1237.40,839.00 V826.30" stroke="#2a2fc8" stroke-width="2.2" fill="none"/><path d="M1237.80,826.70 L1233.50,829.70" stroke="#2a2fc8" stroke-width="1.87" fill="none"/></svg>
<div class="t" style="left:1280.77px;top:824.00px;font-size:18px;line-height:18px;color:#1f1f1f;transform:scaleX(0.9500);transform-origin:0 0;">2</div>
<div class="t" style="left:1330.79px;top:824.00px;font-size:18px;line-height:18px;color:#1f1f1f;transform:scaleX(0.9500);transform-origin:0 0;">3</div>
<svg class="b" style="left:1378px;top:822px;" width="16" height="18" viewBox="1378 822 16 18"><path d="M1383.3,825.6 L1390.4,831.4 L1383.3,837.1" fill="none" stroke="#1f1f1f" stroke-width="1.3"/></svg>
<div class="t" style="left:20.76px;top:880.70px;font-size:18px;line-height:18px;color:#8c8c8c;transform:scaleX(0.9782);transform-origin:0 0;">© 2025</div>
<div class="t" style="left:82.65px;top:880.70px;font-size:18px;line-height:18px;color:#2f7be6;transform:scaleX(0.9737);transform-origin:0 0;">QualifyMe.ai</div>
<div class="t" style="left:182.76px;top:880.70px;font-size:18px;line-height:18px;color:#8c8c8c;transform:scaleX(0.9454);transform-origin:0 0;">| All Rights Reserved.</div>
<div class="t" style="left:1028.44px;top:880.70px;font-size:18px;line-height:18px;color:#2f7be6;transform:scaleX(0.9702);transform-origin:0 0;">Terms &amp; Conditions</div>
<div class="t" style="left:1199.52px;top:880.70px;font-size:18px;line-height:18px;color:#2f7be6;transform:scaleX(0.9222);transform-origin:0 0;">Privacy Policy</div>
<div class="t" style="left:1322.59px;top:880.70px;font-size:18px;line-height:18px;color:#2f7be6;transform:scaleX(0.9396);transform-origin:0 0;">Refund Policy</div>
</body></html>
